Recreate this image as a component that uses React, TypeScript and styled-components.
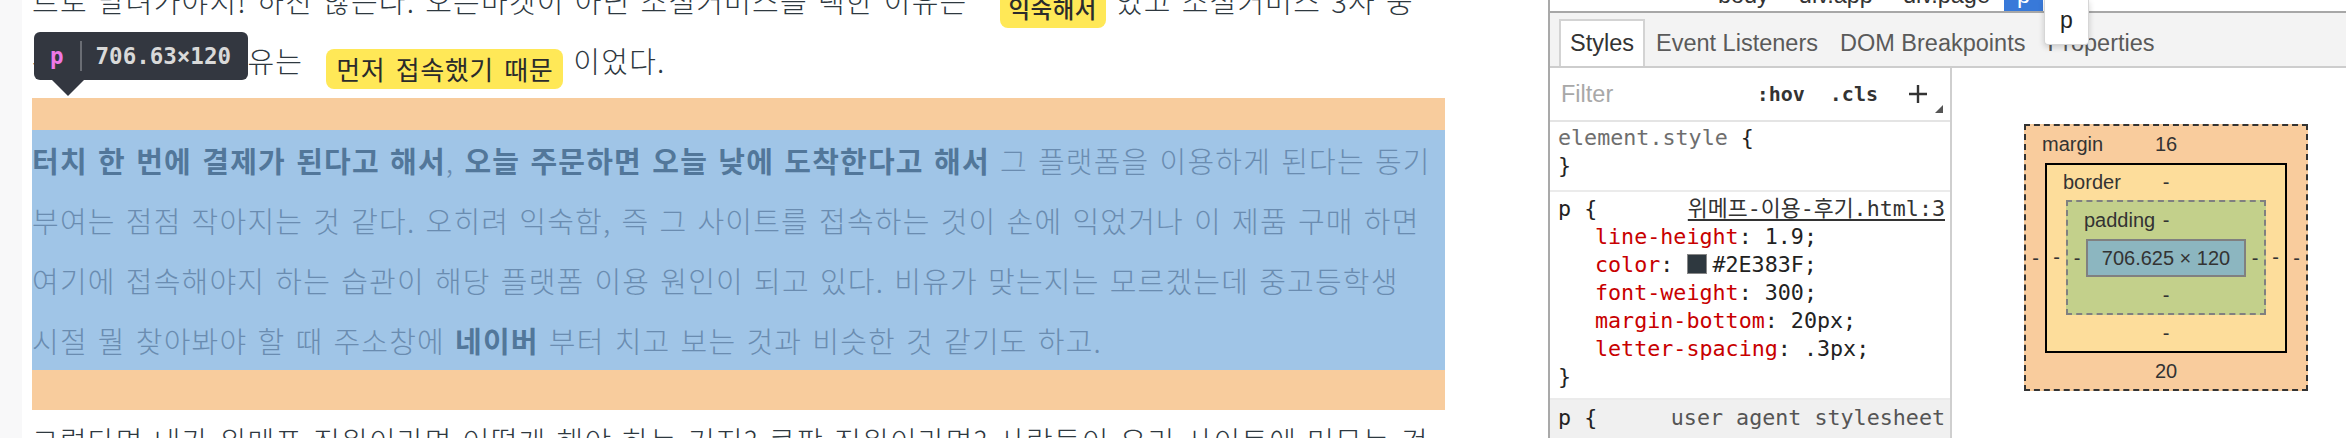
import React from "react";
import styled, { createGlobalStyle } from "styled-components";

const GlobalStyle = createGlobalStyle`
  html, body { margin: 0; padding: 0; background: #fff; overflow: hidden; }
  #root { width: 2346px; height: 438px; }
`;

const Screen = styled.div`
  display: flex;
  width: 2346px;
  height: 438px;
  overflow: hidden;
  background: #fff;
`;

/* ---------- page side ---------- */
const PageArea = styled.div`
  position: relative;
  display: flex;
  flex: none;
  width: 1548px;
  height: 100%;
  overflow: hidden;
`;

const Gutter = styled.div`
  flex: none;
  width: 22px;
  background: #f8f8f9;
`;

const Article = styled.div`
  flex: none;
  width: 1413px;
  margin-left: 10px;
  margin-top: -30px;
  font-family: "Noto Sans CJK KR", sans-serif;
  font-size: 29px;
  font-weight: 300;
  letter-spacing: 1.2px;
  word-spacing: 2.5px;
  line-height: 60px;
  color: #2e383f;
`;

const Para = styled.p<{ $gap?: number }>`
  margin: 0 0 ${(p) => p.$gap ?? 0}px;
  white-space: nowrap;
`;

const Chip = styled.span<{ $small?: boolean }>`
  display: inline-block;
  margin-left: ${(p) => (p.$small ? 22 : 13)}px;
  padding: 0 ${(p) => (p.$small ? 9 : 10)}px;
  height: 40px;
  line-height: 40px;
  vertical-align: ${(p) => (p.$small ? "-5px" : "-7px")};
  border-radius: 8px;
  background: #ffe857;
  color: #2b2b2b;
  font-size: ${(p) => (p.$small ? "23.5px" : "26px")};
  font-weight: ${(p) => (p.$small ? 500 : 400)};
  letter-spacing: ${(p) => (p.$small ? "0.4px" : "0.6px")};
  word-spacing: ${(p) => (p.$small ? "0" : "4px")};
`;

const MarginHighlight = styled.div`
  padding: 32px 0 40px;
  background: #f8cc9d;
`;

const ContentHighlight = styled.div`
  background: #a0c5e7;
  color: #6a8cb0;
`;

const B = styled.b`
  font-weight: 700;
  color: #52779a;
`;

const Tooltip = styled.div`
  position: absolute;
  left: 34px;
  top: 32px;
  height: 48px;
  display: flex;
  align-items: center;
  padding: 0 17px 0 16px;
  border-radius: 6px;
  background: #333740;
  font-family: "DejaVu Sans Mono", monospace;
  font-weight: 700;
  font-size: 22.5px;
  letter-spacing: 0;
`;

const TipTag = styled.span`
  color: #ee78e6;
`;

const TipSep = styled.span`
  width: 2px;
  height: 30px;
  margin: 0 14px 0 16px;
  background: #6a6d74;
`;

const TipSize = styled.span`
  color: #d9d9d9;
`;

const TipArrow = styled.span`
  position: absolute;
  left: 18px;
  top: 48px;
  width: 0;
  height: 0;
  border-left: 16px solid transparent;
  border-right: 16px solid transparent;
  border-top: 16px solid #333740;
`;

/* ---------- devtools side ---------- */
const DevTools = styled.div`
  position: relative;
  flex: 1;
  display: flex;
  flex-direction: column;
  border-left: 2px solid #a9a9a9;
  font-family: "Liberation Sans", Arial, sans-serif;
  color: #333;
  min-width: 0;
`;

const Crumbs = styled.div`
  display: flex;
  height: 11px;
  overflow: hidden;
  border-bottom: 2px solid #a7a7a7;
  font-size: 23.5px;
`;

const CrumbTrail = styled.div`
  flex: none;
  width: 454px;
  display: flex;
  justify-content: flex-end;
  gap: 30px;
  padding-right: 14px;
  box-sizing: border-box;
  overflow: hidden;
`;

const Crumb = styled.span<{ $selected?: boolean }>`
  flex: none;
  display: block;
  height: 11px;
  overflow: hidden;
  padding: 0 ${(p) => (p.$selected ? 13 : 0)}px;
  background: ${(p) => (p.$selected ? "#3879d9" : "transparent")};
  color: ${(p) => (p.$selected ? "#fff" : "#333")};
`;

const CrumbText = styled.span`
  display: block;
  line-height: 24px;
  margin-top: -17px;
`;

const TabBar = styled.div`
  display: flex;
  align-items: flex-end;
  height: 53px;
  padding-left: 9px;
  background: #f3f3f3;
  border-bottom: 2px solid #cdcdcd;
`;

const Tab = styled.div<{ $active?: boolean }>`
  height: 47px;
  box-sizing: border-box;
  display: flex;
  align-items: center;
  padding: 0 9px;
  border: 2px solid ${(p) => (p.$active ? "#d3d3d3" : "transparent")};
  border-bottom: none;
  background: ${(p) => (p.$active ? "#fff" : "transparent")};
  color: ${(p) => (p.$active ? "#333" : "#5a5a5a")};
  font-size: 23.5px;
  white-space: nowrap;
`;

const Popover = styled.div`
  position: absolute;
  top: 0;
  left: 494px;
  width: 45px;
  height: 45px;
  display: flex;
  align-items: center;
  justify-content: center;
  box-sizing: border-box;
  background: #fff;
  border: 1px solid #d6d6d6;
  border-top: none;
  border-radius: 0 0 4px 4px;
  box-shadow: 0 2px 6px rgba(0, 0, 0, 0.18);
  font-size: 23px;
  color: #222;
  padding-bottom: 4px;
`;

const Panes = styled.div`
  flex: 1;
  display: flex;
  min-height: 0;
`;

const StylesPane = styled.div`
  flex: none;
  width: 400px;
  border-right: 2px solid #cfcfcf;
  display: flex;
  flex-direction: column;
`;

const FilterRow = styled.div`
  position: relative;
  flex: none;
  height: 52px;
  display: flex;
  align-items: center;
  padding-left: 11px;
  border-bottom: 2px solid #e4e4e4;
`;

const FilterText = styled.span`
  flex: 1;
  color: #a8a8a8;
  font-size: 23.5px;
`;

const FilterToggle = styled.span`
  margin-left: 25px;
  font-family: "DejaVu Sans Mono", monospace;
  font-weight: 700;
  font-size: 20px;
  color: #333;
`;

const PlusButton = styled.svg`
  margin: 0 22px 0 30px;
`;

const Corner = styled.svg`
  position: absolute;
  right: 7px;
  bottom: 7px;
`;

const Section = styled.div<{ $gray?: boolean; $pt: number; $pb: number }>`
  flex: none;
  padding: ${(p) => p.$pt}px 5px ${(p) => p.$pb}px 8px;
  background: ${(p) => (p.$gray ? "#f0f0f0" : "#fff")};
  border-bottom: ${(p) => (p.$gray ? "none" : "2px solid #ebebeb")};
  font-family: "DejaVu Sans Mono", "Noto Sans CJK KR", monospace;
  font-size: 21.7px;
  line-height: 28px;
  color: #222;
  white-space: nowrap;
`;

const RuleHead = styled.div`
  display: flex;
  justify-content: space-between;
`;

const Selector = styled.span<{ $muted?: boolean }>`
  color: ${(p) => (p.$muted ? "#6e6e6e" : "#222")};
`;

const Source = styled.span<{ $link?: boolean }>`
  color: ${(p) => (p.$link ? "#333" : "#555")};
  text-decoration: ${(p) => (p.$link ? "underline" : "none")};
  text-underline-offset: 3px;
`;

const Decl = styled.div`
  padding-left: 37px;
`;

const PropName = styled.span`
  color: #c80000;
`;

const Swatch = styled.span`
  display: inline-block;
  width: 18px;
  height: 18px;
  margin: 0 5px 0 1px;
  vertical-align: -2px;
  background: #2e383f;
  border: 1px solid #888;
`;

const RightPane = styled.div`
  flex: 1;
  padding: 56px 0 0 72px;
`;

const Layer = styled.div<{ $bg: string; $border: string; $top: number; $side: number }>`
  display: grid;
  grid-template-columns: ${(p) => p.$side}px auto ${(p) => p.$side}px;
  grid-template-rows: ${(p) => p.$top}px auto 36px;
  width: max-content;
  background: ${(p) => p.$bg};
  border: ${(p) => p.$border};
  font-family: "Liberation Sans", Arial, sans-serif;
  font-size: 20px;
  color: #333;
`;

const LayerTop = styled.div`
  grid-column: 1 / 4;
  display: grid;
  grid-template-columns: 1fr auto 1fr;
  align-items: center;
`;

const LayerLabel = styled.span`
  padding-left: 16px;
`;

const Cell = styled.div`
  display: flex;
  align-items: center;
  justify-content: center;
`;

const BottomCell = styled(Cell)`
  grid-column: 1 / 4;
`;

const ContentBox = styled.div`
  width: 156px;
  height: 34px;
  display: flex;
  align-items: center;
  justify-content: center;
  background: #8cb6c0;
  border: 2px solid #808080;
`;

type LayerProps = {
  label: string;
  value: string;
  bottom: string;
  side: string;
  bg: string;
  border: string;
  top: number;
  sideW: number;
  children: React.ReactNode;
};

function BoxLayer({ label, value, bottom, side, bg, border, top, sideW, children }: LayerProps) {
  return (
    <Layer $bg={bg} $border={border} $top={top} $side={sideW}>
      <LayerTop>
        <LayerLabel>{label}</LayerLabel>
        <span>{value}</span>
        <span />
      </LayerTop>
      <Cell>{side}</Cell>
      {children}
      <Cell>{side}</Cell>
      <BottomCell>{bottom}</BottomCell>
    </Layer>
  );
}

const crumbs = ["body", "div.app", "div.page"];

export default function App() {
  return (
    <>
      <GlobalStyle />
      <Screen>
        <PageArea>
          <Gutter />
          <Article>
            <Para $gap={8}>
              트로 달려가야지! 하진 않는다. 오픈마켓이 아닌 소셜커머스를 택한 이유는 <Chip $small>익숙해서</Chip> 였고 소셜커머스 3사 중
              <br />
              위메프를 택한 이유는 <Chip>먼저 접속했기 때문</Chip> 이었다.
            </Para>
            <MarginHighlight>
              <ContentHighlight>
                <Para>
                  <B>터치 한 번에 결제가 된다고 해서</B>, <B>오늘 주문하면 오늘 낮에 도착한다고 해서</B> 그 플랫폼을 이용하게 된다는 동기
                  <br />
                  부여는 점점 작아지는 것 같다. 오히려 익숙함, 즉 그 사이트를 접속하는 것이 손에 익었거나 이 제품 구매 하면
                  <br />
                  여기에 접속해야지 하는 습관이 해당 플랫폼 이용 원인이 되고 있다. 비유가 맞는지는 모르겠는데 중고등학생
                  <br />
                  시절 뭘 찾아봐야 할 때 주소창에 <B>네이버</B> 부터 치고 보는 것과 비슷한 것 같기도 하고.
                </Para>
              </ContentHighlight>
            </MarginHighlight>
            <Para>
              그렇다면 내가 위메프 직원이라면 어떻게 해야 하는 거지? 쿠팡 직원이라면? 사람들이 우리 사이트에 머무는 것
            </Para>
          </Article>
          <Tooltip>
            <TipTag>p</TipTag>
            <TipSep />
            <TipSize>706.63×120</TipSize>
            <TipArrow />
          </Tooltip>
        </PageArea>

        <DevTools>
          <Crumbs>
            <CrumbTrail>
              {crumbs.map((c) => (
                <Crumb key={c}>
                  <CrumbText>{c}</CrumbText>
                </Crumb>
              ))}
            </CrumbTrail>
            <Crumb $selected>
              <CrumbText>p</CrumbText>
            </Crumb>
          </Crumbs>
          <TabBar>
            <Tab $active>Styles</Tab>
            <Tab>Event Listeners</Tab>
            <Tab>DOM Breakpoints</Tab>
            <Tab>Properties</Tab>
          </TabBar>
          <Popover>p</Popover>
          <Panes>
            <StylesPane>
              <FilterRow>
                <FilterText>Filter</FilterText>
                <FilterToggle>:hov</FilterToggle>
                <FilterToggle>.cls</FilterToggle>
                <PlusButton width="20" height="20" viewBox="0 0 20 20">
                  <path d="M10 1v18M1 10h18" stroke="#333" strokeWidth="2.4" fill="none" />
                </PlusButton>
                <Corner width="8" height="8" viewBox="0 0 8 8">
                  <polygon points="8,0 8,8 0,8" fill="#555" />
                </Corner>
              </FilterRow>
              <Section $pt={2} $pb={10}>
                <div>
                  <Selector $muted>element.style</Selector> {"{"}
                </div>
                <div>{"}"}</div>
              </Section>
              <Section $pt={3} $pb={7}>
                <RuleHead>
                  <span>p {"{"}</span>
                  <Source $link>위메프-이용-후기.html:3</Source>
                </RuleHead>
                <Decl>
                  <PropName>line-height</PropName>: 1.9;
                </Decl>
                <Decl>
                  <PropName>color</PropName>: <Swatch />#2E383F;
                </Decl>
                <Decl>
                  <PropName>font-weight</PropName>: 300;
                </Decl>
                <Decl>
                  <PropName>margin-bottom</PropName>: 20px;
                </Decl>
                <Decl>
                  <PropName>letter-spacing</PropName>: .3px;
                </Decl>
                <div>{"}"}</div>
              </Section>
              <Section $gray $pt={4} $pb={20}>
                <RuleHead>
                  <span>p {"{"}</span>
                  <Source>user agent stylesheet</Source>
                </RuleHead>
              </Section>
            </StylesPane>
            <RightPane>
              <BoxLayer label="margin" value="16" bottom="20" side="-" bg="#f9cc9d" border="2px dashed #333" top={37} sideW={19}>
                <BoxLayer label="border" value="-" bottom="-" side="-" bg="#fddd9b" border="2px solid #000" top={35} sideW={19}>
                  <BoxLayer label="padding" value="-" bottom="-" side="-" bg="#c3d08b" border="2px dashed #808080" top={37} sideW={18}>
                    <ContentBox>706.625 × 120</ContentBox>
                  </BoxLayer>
                </BoxLayer>
              </BoxLayer>
            </RightPane>
          </Panes>
        </DevTools>
      </Screen>
    </>
  );
}
